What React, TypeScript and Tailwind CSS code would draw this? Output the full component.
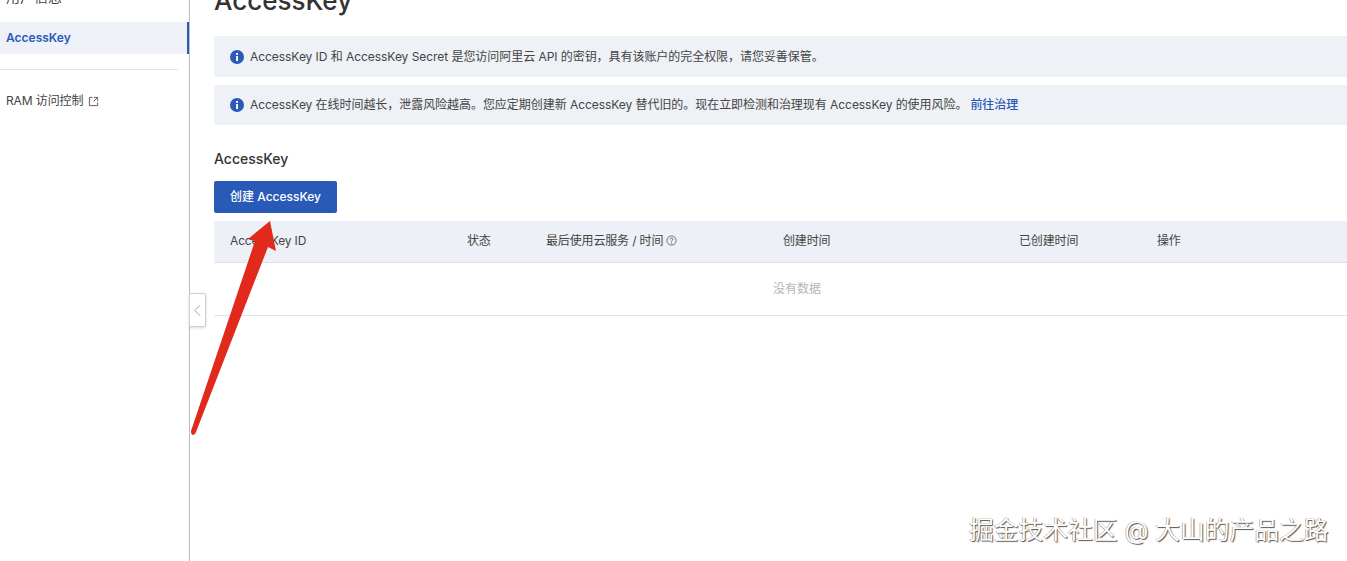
import React from "react";

function InfoIcon() {
  return (
    <svg viewBox="0 0 14 14" className="w-[14px] h-[14px] shrink-0">
      <circle cx="7" cy="7" r="7" fill="#2a5ab8" />
      <rect x="6.1" y="6" width="1.9" height="5" fill="#fff" />
      <rect x="6.1" y="3" width="1.9" height="1.9" fill="#fff" />
    </svg>
  );
}

function Th({ children }: { children: React.ReactNode }) {
  return <div className="pl-4 pb-[2px] flex items-center gap-[3px]">{children}</div>;
}

export default function App() {
  return (
    <div className="relative h-[561px] w-[1347px] overflow-hidden bg-white flex text-[#444] text-[12px] font-['Inter','Noto_Sans_CJK_SC',sans-serif]">
      <aside className="w-[190px] shrink-0 border-r border-[#bdbdbd] -mt-[16px]">
        <div className="h-[32px] pl-[6px] pb-[8px] flex items-center text-[14px]">用户信息</div>
        <div className="mt-[6px] h-[32px] pl-[6px] flex items-center font-semibold text-[#2a5ab8] bg-[#eef1f7] border-r-[2px] border-[#2a5ab8]">
          AccessKey
        </div>
        <div className="mt-[15px] h-px w-[178px] bg-[#e2e2e2]" />
        <div className="mt-[15px] h-[32px] pl-[6px] flex items-center gap-[5px] tracking-[-0.1px]">
          <span>RAM 访问控制</span>
          <svg viewBox="0 0 12 12" className="w-[11px] h-[11px]" fill="none" stroke="#555" strokeWidth="1">
            <path d="M5 1.5H1.5v9h9V7" />
            <path d="M6.5 1.5h4v4M10.5 1.5 6 6" />
          </svg>
        </div>
      </aside>

      <main className="w-[1190px] shrink-0 pl-6 -mt-[19px]">
        <h1 className="h-[40px] leading-[40px] text-[26px] font-medium text-[#333]">AccessKey</h1>
        <div className="mt-[15px] h-[41px] bg-[#eef1f6] rounded-[2px] pl-4 flex items-center gap-[6px] tracking-[-0.05px]">
          <InfoIcon />
          <span>AccessKey ID 和 AccessKey Secret 是您访问阿里云 API 的密钥，具有该账户的完全权限，请您妥善保管。</span>
        </div>
        <div className="mt-[8px] h-[40px] bg-[#eef1f6] rounded-[2px] pl-4 flex items-center gap-[6px] tracking-[-0.05px]">
          <InfoIcon />
          <span>
            AccessKey 在线时间越长，泄露风险越高。您应定期创建新 AccessKey 替代旧的。现在立即检测和治理现有 AccessKey 的使用风险。
            <span className="ml-[3px] font-medium text-[#2a5ab8]">前往治理</span>
          </span>
        </div>
        <h2 className="mt-[24px] h-[20px] leading-[20px] text-[14px] font-medium text-[#333]">AccessKey</h2>
        <button className="mt-[12px] block h-[32px] w-[123px] rounded-[2px] bg-[#2a5ab8] text-white text-[12px] font-medium">
          创建 AccessKey
        </button>
        <div className="mt-[8px] w-[1166px]">
          <div className="h-[42px] bg-[#edf0f6] border-b border-[#dfe2e8] grid grid-cols-[237px_79px_237px_236px_138px_1fr] tracking-[-0.15px]">
            <Th>AccessKey ID</Th>
            <Th>状态</Th>
            <Th>
              最后使用云服务 / 时间
              <svg viewBox="0 0 12 12" className="w-[11px] h-[11px]" fill="none" stroke="#555" strokeWidth="0.9">
                <circle cx="6" cy="6" r="5" />
                <path d="M4.5 4.8a1.5 1.5 0 1 1 2.2 1.3c-.5.3-.7.6-.7 1.1" />
                <circle cx="6" cy="8.8" r="0.3" />
              </svg>
            </Th>
            <Th>创建时间</Th>
            <Th>已创建时间</Th>
            <Th>操作</Th>
          </div>
          <div className="h-[53px] border-b border-[#e3e3e3] flex items-center justify-center text-[#b5b5b5]">
            没有数据
          </div>
        </div>
      </main>

      <div className="absolute left-[189px] top-[293px] w-[17px] h-[34px] bg-white border border-[#cfcfcf] rounded-r-[2px] shadow-[0_1px_3px_rgba(0,0,0,0.15)] flex items-center justify-center">
        <svg viewBox="0 0 10 14" className="w-[9px] h-[13px]" fill="none" stroke="#999" strokeWidth="1">
          <path d="M8 1 2 7l6 6" />
        </svg>
      </div>

      <svg className="absolute left-0 top-0 pointer-events-none" width="1347" height="561" viewBox="0 0 1347 561">
        <path
          d="M270 221 L248 239 L255 241 L191 431 Q191 435 193 435 Q195 435 196 432 L268 247 L276 251 Z"
          fill="#e12a1c"
        />
      </svg>

      <div className="absolute left-[969px] top-[515px] text-[24.75px] leading-[30px] text-white whitespace-nowrap [text-shadow:1px_1px_1px_#555,-0.5px_-0.5px_0.5px_#888]">
        掘金技术社区 @ 大山的产品之路
      </div>
    </div>
  );
}
